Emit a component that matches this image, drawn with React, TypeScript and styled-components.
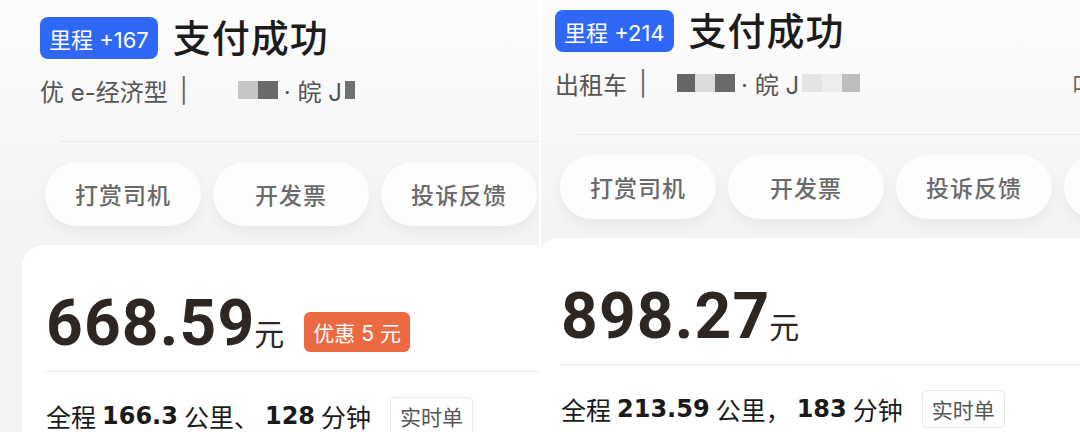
import styled, { createGlobalStyle } from "styled-components";

const GlobalStyle = createGlobalStyle`
  html, body {
    margin: 0;
    padding: 0;
    background: #fff;
  }
  body {
    font-family: "Inter", "Noto Sans CJK SC", sans-serif;
    width: 1080px;
    height: 432px;
    overflow: hidden;
  }
`;

const Screen = styled.div`
  display: flex;
  gap: 2px;
  width: 1080px;
  height: 432px;
  background: #fff;
`;

const Panel = styled.div`
  width: 539px;
  height: 432px;
  flex-shrink: 0;
  overflow: hidden;
  background: linear-gradient(180deg, #fdfdfd 0%, #f8f8f9 110px, #f3f4f5 230px);
`;

const Inner = styled.div<{ $dx: number; $dy: number }>`
  margin-left: ${(p) => p.$dx}px;
  margin-top: ${(p) => p.$dy}px;
`;

const Header = styled.div`
  padding: 17px 0 0 40px;
`;

const TitleRow = styled.div`
  display: flex;
  align-items: center;
  gap: 15px;
  height: 42px;
`;

const MileBadge = styled.span`
  display: flex;
  align-items: center;
  height: 42px;
  padding: 0 9px;
  border-radius: 8px;
  background: #2f68f7;
  color: #fff;
  font-size: 22px;
  white-space: nowrap;
`;

const Title = styled.h1`
  margin: 0;
  font-size: 38px;
  line-height: 42px;
  font-weight: 500;
  color: #1c1c1c;
  letter-spacing: 1px;
`;

const SubRow = styled.div`
  display: flex;
  align-items: center;
  height: 30px;
  margin-top: 16px;
  font-size: 24px;
  color: #555;
  white-space: nowrap;
`;

const Pipe = styled.span`
  margin-left: 12px;
  color: #666;
`;

const Plate = styled.span<{ $gap: number }>`
  display: flex;
  align-items: center;
  margin-left: ${(p) => p.$gap}px;
`;

const PlateBlock = styled.span<{ $w: number; $c: string }>`
  display: inline-block;
  width: ${(p) => p.$w}px;
  height: 18px;
  background: ${(p) => p.$c};
  filter: blur(0.6px);
`;

const PlateText = styled.span`
  margin: 0 3px 0 6px;
  color: #555;
`;

const SideLink = styled.span`
  margin-left: auto;
  margin-right: -40px;
  color: #666;
`;

const Divider = styled.div<{ $indent: number }>`
  height: 1px;
  margin-left: ${(p) => p.$indent}px;
  background: #e8e9ea;
`;

const TopDivider = styled(Divider)`
  margin-top: 36px;
`;

const ActionRow = styled.div`
  display: flex;
  gap: 12px;
  margin-top: 20px;
  padding-left: 45px;
`;

const ActionButton = styled.button`
  flex-shrink: 0;
  width: 156px;
  height: 64px;
  border: none;
  border-radius: 32px;
  background: #fdfdfd;
  box-shadow: 0 6px 14px rgba(0, 0, 0, 0.05);
  font-family: "Noto Sans CJK SC", sans-serif;
  font-size: 23px;
  font-weight: 500;
  color: #6a6a6a;
  letter-spacing: 1px;
`;

const Card = styled.div`
  margin: 19px 0 0 22px;
  min-height: 200px;
  padding: 47px 0 0 24px;
  background: #fff;
  border-top-left-radius: 22px;
`;

const PriceRow = styled.div`
  display: flex;
  align-items: flex-start;
  height: 64px;
`;

const Amount = styled.div`
  height: 64px;
  font-family: "Roboto", sans-serif;
  font-size: 64px;
  line-height: 64px;
  font-weight: 700;
  letter-spacing: 1.2px;
  color: #2d2623;
  white-space: nowrap;
`;

const Unit = styled.span`
  margin-left: -1px;
  font-family: "Noto Sans CJK SC", sans-serif;
  font-size: 30px;
  line-height: 30px;
  font-weight: 400;
  letter-spacing: 0;
`;

const Discount = styled.span`
  display: flex;
  align-items: center;
  height: 40px;
  margin: 20px 0 0 20px;
  padding: 0 9px;
  border-radius: 6px;
  background: #eb6a41;
  color: #fff;
  font-size: 21px;
  white-space: nowrap;
`;

const PriceDivider = styled(Divider)`
  margin-top: 15px;
  background: #ececec;
`;

const TripRow = styled.div`
  display: flex;
  align-items: center;
  height: 38px;
  margin-top: 25px;
  font-size: 25px;
  color: #1a1a1a;
  white-space: nowrap;
`;

const Num = styled.b`
  margin: 0 6px;
  font-family: "DejaVu Sans", sans-serif;
  font-weight: 700;
  font-size: 24px;
`;

const Tag = styled.span`
  display: flex;
  align-items: center;
  height: 38px;
  margin-left: 19px;
  padding: 0 9px;
  border: 1px solid #e6e6e6;
  border-radius: 5px;
  font-size: 21px;
  color: #555;
  box-sizing: border-box;
`;

type Block = { w: number; c: string };

interface IOrder {
  dx: number;
  dy: number;
  mileage: string;
  carType: string;
  plateGap: number;
  plateFront: Block[];
  plateBack: Block[];
  sideLink?: string;
  actions: string[];
  price: string;
  discount?: string;
  distance: string;
  minutes: string;
  comma: string;
}

const orders: IOrder[] = [
  {
    dx: 0,
    dy: 0,
    mileage: "里程 +167",
    carType: "优 e-经济型",
    plateGap: 50,
    plateFront: [
      { w: 20, c: "#c6c6c6" },
      { w: 20, c: "#6a6a6a" },
    ],
    plateBack: [{ w: 10, c: "#707070" }],
    actions: ["打赏司机", "开发票", "投诉反馈"],
    price: "668.59",
    discount: "优惠 5 元",
    distance: "166.3",
    minutes: "128",
    comma: "、",
  },
  {
    dx: -26,
    dy: -7,
    mileage: "里程 +214",
    carType: "出租车",
    plateGap: 30,
    plateFront: [
      { w: 18, c: "#666" },
      { w: 20, c: "#dcdcdc" },
      { w: 20, c: "#6a6a6a" },
    ],
    plateBack: [
      { w: 20, c: "#e4e4e4" },
      { w: 20, c: "#ededed" },
      { w: 18, c: "#bdbdbd" },
    ],
    sideLink: "叫车",
    actions: ["打赏司机", "开发票", "投诉反馈", "分享行程"],
    price: "898.27",
    distance: "213.59",
    minutes: "183",
    comma: "，",
  },
];

function OrderPanel({ order }: { order: IOrder }) {
  return (
    <Panel>
      <Inner $dx={order.dx} $dy={order.dy}>
        <Header>
          <TitleRow>
            <MileBadge>{order.mileage}</MileBadge>
            <Title>支付成功</Title>
          </TitleRow>
          <SubRow>
            {order.carType}
            <Pipe>|</Pipe>
            <Plate $gap={order.plateGap}>
              {order.plateFront.map((b, i) => (
                <PlateBlock key={i} $w={b.w} $c={b.c} />
              ))}
              <PlateText>· 皖 J</PlateText>
              {order.plateBack.map((b, i) => (
                <PlateBlock key={i} $w={b.w} $c={b.c} />
              ))}
            </Plate>
            {order.sideLink && <SideLink>{order.sideLink}</SideLink>}
          </SubRow>
        </Header>
        <TopDivider $indent={60} />
        <ActionRow>
          {order.actions.map((a) => (
            <ActionButton key={a}>{a}</ActionButton>
          ))}
        </ActionRow>
        <Card>
          <PriceRow>
            <Amount>
              {order.price}
              <Unit>元</Unit>
            </Amount>
            {order.discount && <Discount>{order.discount}</Discount>}
          </PriceRow>
          <PriceDivider $indent={0} />
          <TripRow>
            全程<Num>{order.distance}</Num>公里{order.comma}
            <Num>{order.minutes}</Num>分钟
            <Tag>实时单</Tag>
          </TripRow>
        </Card>
      </Inner>
    </Panel>
  );
}

export default function App() {
  return (
    <>
      <GlobalStyle />
      <Screen>
        {orders.map((o) => (
          <OrderPanel key={o.price} order={o} />
        ))}
      </Screen>
    </>
  );
}
